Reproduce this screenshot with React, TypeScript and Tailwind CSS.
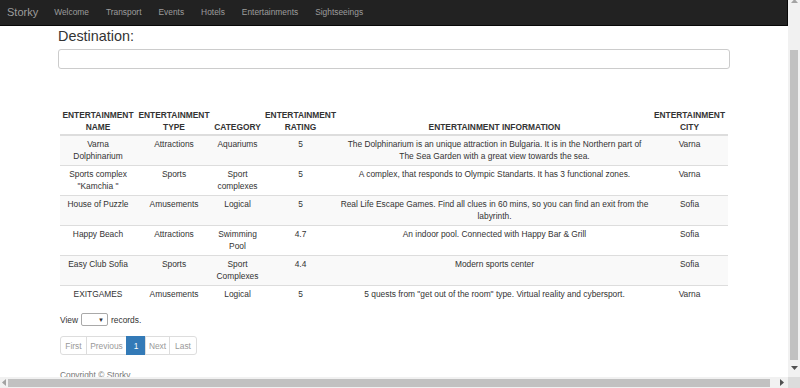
import React from 'react';

interface Entertainment {
  name: React.ReactNode;
  type: string;
  category: React.ReactNode;
  rating: string;
  info: React.ReactNode;
  city: string;
}

const rows: Entertainment[] = [
  {
    name: <>Varna<br />Dolphinarium</>,
    type: 'Attractions',
    category: 'Aquariums',
    rating: '5',
    info: <>The Dolphinarium is an unique attraction in Bulgaria. It is in the Northern part of<br />The Sea Garden with a great view towards the sea.</>,
    city: 'Varna',
  },
  {
    name: <>Sports complex<br />"Kamchia "</>,
    type: 'Sports',
    category: <>Sport<br />complexes</>,
    rating: '5',
    info: 'A complex, that responds to Olympic Standarts. It has 3 functional zones.',
    city: 'Varna',
  },
  {
    name: 'House of Puzzle',
    type: 'Amusements',
    category: 'Logical',
    rating: '5',
    info: <>Real Life Escape Games. Find all clues in 60 mins, so you can find an exit from the<br />labyrinth.</>,
    city: 'Sofia',
  },
  {
    name: 'Happy Beach',
    type: 'Attractions',
    category: <>Swimming<br />Pool</>,
    rating: '4.7',
    info: 'An indoor pool. Connected with Happy Bar & Grill',
    city: 'Sofia',
  },
  {
    name: 'Easy Club Sofia',
    type: 'Sports',
    category: <>Sport<br />Complexes</>,
    rating: '4.4',
    info: 'Modern sports center',
    city: 'Sofia',
  },
  {
    name: 'EXITGAMES',
    type: 'Amusements',
    category: 'Logical',
    rating: '5',
    info: '5 quests from "get out of the room" type. Virtual reality and cybersport.',
    city: 'Varna',
  },
];

const navLinks = ['Welcome', 'Transport', 'Events', 'Hotels', 'Entertainments', 'Sightseeings'];

const th = 'px-[2px] pt-[1px] pb-[1px] text-center align-bottom font-bold border-b-2 border-[#dddddd]';
const td = 'px-[2px] pt-[2px] pb-[3px] text-center align-top whitespace-nowrap border-t border-[#dddddd]';

const App: React.FC = () => {
  return (
    <div className="w-[800px] h-[388px] flex flex-col overflow-hidden bg-white text-[#333333] font-['Liberation_Sans',Arial,sans-serif]">
      <div className="flex flex-1 min-h-0">
        <div className="flex-1 overflow-hidden">
          {/* navbar */}
          <nav className="h-[26px] bg-[#222222] border-b border-[#080808] border-r flex items-center text-[#9d9d9d]">
            <span className="pl-[7px] text-[11px] leading-none">Storky</span>
            <ul className="flex items-center gap-[17px] ml-[16px] text-[8.4px] leading-none">
              {navLinks.map((l) => (
                <li key={l}>{l}</li>
              ))}
            </ul>
          </nav>

          <div className="w-[672px] mx-auto">
            <h3 className="mt-[2px] text-[14.4px] leading-[16px]">Destination:</h3>
            <input className="mt-[5px] block w-full h-[20px] border border-[#cccccc] rounded-[3px]" />

            <table className="mt-[39px] mx-[2px] table-fixed border-collapse text-[8.4px] leading-[12px] w-[668px]">
              <colgroup>
                <col className="w-[76px]" />
                <col className="w-[76px]" />
                <col className="w-[51px]" />
                <col className="w-[75px]" />
                <col className="w-[313px]" />
                <col className="w-[77px]" />
              </colgroup>
              <thead>
                <tr>
                  <th className={th}>ENTERTAINMENT<br />NAME</th>
                  <th className={th}>ENTERTAINMENT<br />TYPE</th>
                  <th className={th}>CATEGORY</th>
                  <th className={th}>ENTERTAINMENT<br />RATING</th>
                  <th className={th}>ENTERTAINMENT INFORMATION</th>
                  <th className={th}>ENTERTAINMENT<br />CITY</th>
                </tr>
              </thead>
              <tbody>
                {rows.map((r, i) => (
                  <tr key={i} className={i % 2 === 0 ? 'bg-[#f9f9f9]' : 'bg-white'}>
                    <td className={td}>{r.name}</td>
                    <td className={td}>{r.type}</td>
                    <td className={td}>{r.category}</td>
                    <td className={td}>{r.rating}</td>
                    <td className={td}>{r.info}</td>
                    <td className={td}>{r.city}</td>
                  </tr>
                ))}
              </tbody>
            </table>

            <div className="mt-[10px] ml-[2px] flex items-center text-[8.4px] leading-[12px]">
              <span>View</span>
              <div className="ml-[3px] w-[27px] h-[13px] border border-[#a9a9a9] rounded-[2px] bg-white flex items-center justify-end pr-[3px]">
                <span className="text-[6px] leading-none text-[#333]">▼</span>
              </div>
              <span className="ml-[3px]">records.</span>
            </div>

            <div className="mt-[10px] ml-[2px] flex text-[8.4px] leading-[12px]">
              <span className="w-[27px] h-[19px] flex items-center justify-center border border-[#dddddd] rounded-l-[3px] text-[#999999]">First</span>
              <span className="w-[41px] h-[19px] -ml-px flex items-center justify-center border border-[#dddddd] text-[#999999]">Previous</span>
              <span className="w-[20px] h-[19px] -ml-px flex items-center justify-center border border-[#337ab7] bg-[#337ab7] text-white">1</span>
              <span className="w-[25px] h-[19px] -ml-px flex items-center justify-center border border-[#dddddd] text-[#999999]">Next</span>
              <span className="w-[28px] h-[19px] -ml-px flex items-center justify-center border border-[#dddddd] rounded-r-[3px] text-[#999999]">Last</span>
            </div>

            <p className="mt-[14px] ml-[2px] text-[8.4px] leading-[12px] text-[#777777]">Copyright © Storky</p>
          </div>
        </div>

        {/* vertical scrollbar */}
        <div className="w-[12px] bg-[#f1f1f1] flex flex-col items-center">
          <svg width="7" height="4" viewBox="0 0 7 4" className="-mt-[1px]">
            <path d="M3.5 0 L7 4 L0 4 Z" fill="#a3a3a3" />
          </svg>
          <div className="mt-[47px] w-[8px] h-[310px] bg-[#c1c1c1]" />
          <svg width="7" height="4" viewBox="0 0 7 4" className="mt-[6px]">
            <path d="M0 0 L7 0 L3.5 4 Z" fill="#505050" />
          </svg>
        </div>
      </div>

      {/* horizontal scrollbar */}
      <div className="h-[11px] flex bg-[#f1f1f1] items-center">
        <svg width="4" height="7" viewBox="0 0 4 7" className="ml-[2px]">
          <path d="M4 0 L4 7 L0 3.5 Z" fill="#a3a3a3" />
        </svg>
        <div className="ml-[2px] w-[762px] h-[8px] bg-[#c1c1c1]" />
        <svg width="4" height="7" viewBox="0 0 4 7" className="ml-[10px]">
          <path d="M0 0 L4 3.5 L0 7 Z" fill="#505050" />
        </svg>
        <div className="ml-auto w-[12px] h-full bg-[#dcdcdc]" />
      </div>
    </div>
  );
};

export default App;
